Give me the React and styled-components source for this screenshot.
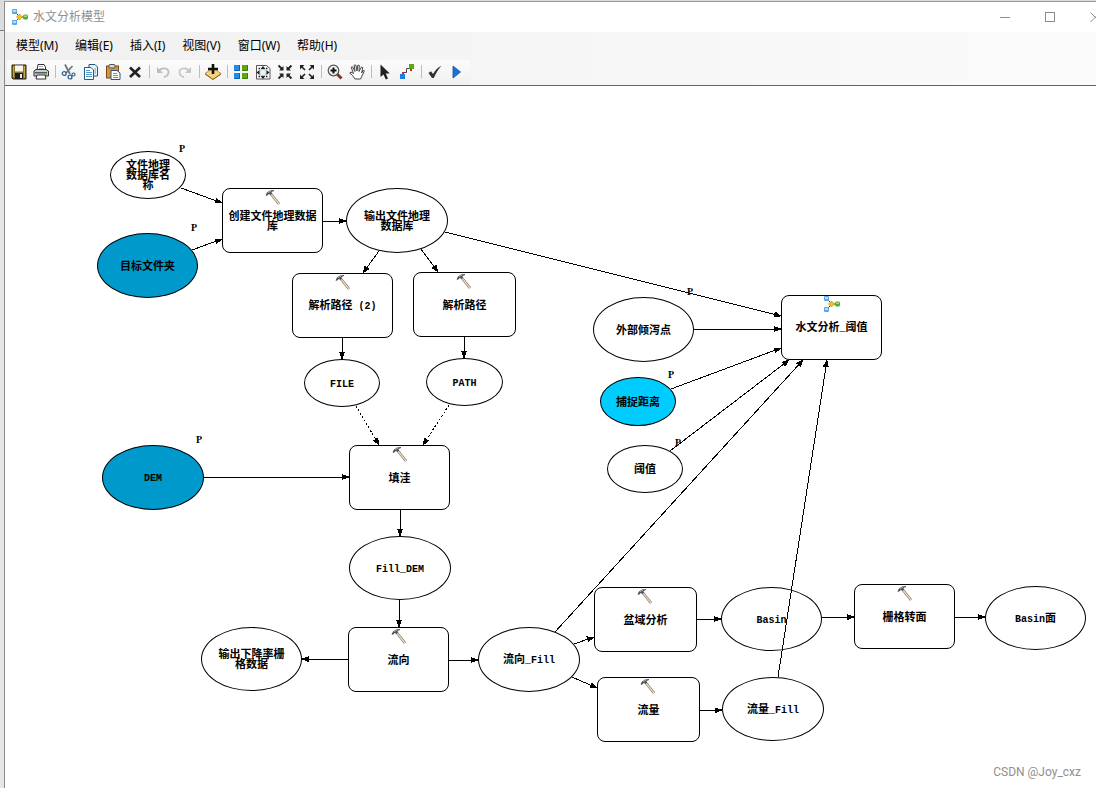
import React, { useState } from "react";
import styled, { createGlobalStyle } from "styled-components";

const menus = ["模型(M)", "编辑(E)", "插入(I)", "视图(V)", "窗口(W)", "帮助(H)"];

// canvas coordinates of every element of the model
const nodes = [
  { id: "name", kind: "data", x: 105, y: 65, w: 76, h: 48, lines: ["文件地理", "数据库名", "称"] },
  { id: "folder", kind: "data", x: 92, y: 147, w: 101, h: 65, fill: "#0099cc", lines: ["目标文件夹"] },
  { id: "create", kind: "tool", x: 217, y: 102, w: 101, h: 65, lines: ["创建文件地理数据", "库"] },
  { id: "gdb", kind: "data", x: 341, y: 102, w: 102, h: 65, lines: ["输出文件地理", "数据库"] },
  { id: "parse2", kind: "tool", x: 287, y: 187, w: 101, h: 65, lines: ["解析路径 (2)"] },
  { id: "parse", kind: "tool", x: 408, y: 186, w: 103, h: 65, lines: ["解析路径"] },
  { id: "file", kind: "data", x: 299, y: 273, w: 76, h: 48, lines: ["FILE"] },
  { id: "path", kind: "data", x: 421, y: 272, w: 77, h: 48, lines: ["PATH"] },
  { id: "dem", kind: "data", x: 97, y: 359, w: 102, h: 65, fill: "#0099cc", lines: ["DEM"] },
  { id: "fill", kind: "tool", x: 344, y: 359, w: 101, h: 65, lines: ["填洼"] },
  { id: "filldem", kind: "data", x: 344, y: 450, w: 102, h: 64, lines: ["Fill_DEM"] },
  { id: "flowdir", kind: "tool", x: 343, y: 541, w: 101, h: 65, lines: ["流向"] },
  { id: "drop", kind: "data", x: 196, y: 541, w: 101, h: 64, lines: ["输出下降率栅", "格数据"] },
  { id: "dirfill", kind: "data", x: 473, y: 541, w: 102, h: 65, lines: ["流向_Fill"] },
  { id: "basintool", kind: "tool", x: 589, y: 501, w: 103, h: 65, lines: ["盆域分析"] },
  { id: "flowacc", kind: "tool", x: 592, y: 591, w: 103, h: 65, lines: ["流量"] },
  { id: "basin", kind: "data", x: 716, y: 501, w: 101, h: 64, lines: ["Basin"] },
  { id: "accfill", kind: "data", x: 717, y: 591, w: 102, h: 64, lines: ["流量_Fill"] },
  { id: "raster", kind: "tool", x: 849, y: 498, w: 101, h: 65, lines: ["栅格转面"] },
  { id: "basinpoly", kind: "data", x: 980, y: 500, w: 101, h: 64, lines: ["Basin面"] },
  { id: "pour", kind: "data", x: 588, y: 211, w: 101, h: 65, lines: ["外部倾泻点"] },
  { id: "snap", kind: "data", x: 595, y: 291, w: 76, h: 49, fill: "#00ccff", lines: ["捕捉距离"] },
  { id: "limit", kind: "data", x: 602, y: 359, w: 76, h: 48, lines: ["阈值"] },
  { id: "hydro", kind: "tool", x: 776, y: 209, w: 101, h: 65, icon: "model", lines: ["水文分析_阈值"] },
];

// [x1, y1, x2, y2, dotted]
const links = [
  [176, 102, 217, 117],
  [187, 164, 217, 153],
  [318, 135, 341, 135],
  [374, 165, 358, 187],
  [416, 163, 433, 186],
  [440, 146, 776, 230],
  [337, 252, 337, 273],
  [459, 251, 459, 272],
  [351, 320, 374, 359, true],
  [444, 319, 418, 359, true],
  [199, 391, 344, 391],
  [395, 424, 395, 450],
  [394, 514, 394, 541],
  [343, 574, 297, 573],
  [444, 574, 473, 574],
  [569, 558, 589, 551],
  [567, 591, 592, 602],
  [550, 546, 798, 274],
  [692, 533, 716, 533],
  [695, 625, 717, 624],
  [817, 532, 849, 531],
  [950, 531, 980, 531],
  [773, 591, 822, 274],
  [689, 243, 776, 243],
  [666, 303, 776, 262],
  [665, 365, 784, 274],
];

const params = [
  [174, 58],
  [186, 137],
  [191, 349],
  [682, 201],
  [663, 284],
  [670, 352],
];

const ModelIcon = () => (
  <svg width="16" height="16" viewBox="0 0 16 16">
    <path d="M3 3 L8 8 L3 13 M8 8 H12" fill="none" stroke="#444" />
    <rect x="0" y="0" width="5" height="5" rx="1" fill="#5aa9e8" />
    <rect x="1" y="1" width="3" height="2" fill="#b5dcfa" />
    <rect x="0" y="11" width="5" height="5" rx="1" fill="#5aa9e8" />
    <rect x="1" y="12" width="3" height="2" fill="#b5dcfa" />
    <path d="M7.5 5 L10.5 8 L7.5 11 L4.5 8 Z" fill="#f6c21c" stroke="#b98400" strokeWidth=".6" />
    <rect x="11" y="5.5" width="5" height="5" rx="1.5" fill="#4fae35" />
    <rect x="12" y="6.5" width="3" height="1.5" fill="#a5dd86" />
  </svg>
);

const HammerIcon = () => (
  <svg width="16" height="16" viewBox="0 0 16 16">
    <path d="M6 5 L14 15" stroke="#7b6a55" strokeWidth="2.6" />
    <path d="M6 5 L14 15" stroke="#e9dcc3" strokeWidth="1.3" />
    <path d="M0.5 6.5 L2 3.5 L5 1.5 L9 1 L9 2 L6.5 3 L7 5 L5 6 L4 4.8 L2 6.8 Z" fill="#4c4f52" />
    <path d="M3 3.6 L6 2.2" stroke="#c4c8cb" strokeWidth=".8" />
  </svg>
);

const drawings = {
  save: (
    <>
      <path d="M1 1 H15 V15 H2 L1 14 Z" fill="#8a7529" stroke="#26200a" />
      <rect x="4" y="1.5" width="8" height="6" fill="#f4f4f0" />
      <rect x="4" y="9" width="8" height="6" fill="#1d1d1d" />
      <rect x="9" y="10" width="2" height="4" fill="#e8e8e8" />
      <path d="M2.5 2 V13 M13.5 2 V14" stroke="#c2ab4e" />
    </>
  ),
  print: (
    <>
      <path d="M4 6 L5 0.5 H11 L12.5 3 V6" fill="#fff" stroke="#333" />
      <path d="M6 2.5 H10 M6 4.5 H11" stroke="#999" strokeWidth=".8" />
      <path d="M1 7 L3 5.5 H13 L15.5 7 V12 H1 Z" fill="#c9cdd2" stroke="#333" />
      <rect x="2" y="8" width="12" height="1.5" fill="#565b60" />
      <path d="M4 11 H12 L13 15 H3 Z" fill="#fff" stroke="#333" />
      <rect x="12" y="10" width="2" height="1" fill="#5ec03c" />
    </>
  ),
  cut: (
    <>
      <path d="M4 0.5 L9 10 M11.5 2 L5 9" stroke="#6c7780" strokeWidth="1.8" fill="none" />
      <circle cx="3.2" cy="9.5" r="1.9" fill="#fff" stroke="#2f6596" strokeWidth="1.4" />
      <circle cx="9" cy="13" r="1.9" fill="#fff" stroke="#2f6596" strokeWidth="1.4" />
      <circle cx="12.5" cy="10.5" r="1.5" fill="#fff" stroke="#2f6596" strokeWidth="1.2" />
    </>
  ),
  copy: (
    <>
      <path d="M6 0.5 H12 L14.5 3 V12 H6 Z" fill="#e8f3fb" stroke="#275a80" />
      <path d="M1.5 3.5 H8 L10.5 6 V15.5 H1.5 Z" fill="#fff" stroke="#275a80" />
      <path d="M3 6.5 H7 M3 8.5 H9 M3 10.5 H9 M3 12.5 H9 M11.5 5 H13 M11.5 7 H13 M11.5 9 H13" stroke="#4f9bd1" />
    </>
  ),
  paste: (
    <>
      <rect x="1.5" y="2" width="12" height="12" fill="#d6923c" stroke="#7a4b12" />
      <rect x="4" y="0.5" width="6" height="3.5" rx="1" fill="#d8d8d8" stroke="#555" />
      <path d="M6 6.5 H12 L15 9 V15.5 H6 Z" fill="#fff" stroke="#275a80" />
      <path d="M8 9.5 H12 M8 11.5 H13 M8 13.5 H13" stroke="#4f9bd1" />
    </>
  ),
  remove: <path d="M3 3.5 L13 13 M13 3.5 L3 13" stroke="#222" strokeWidth="2.6" />,
  undo: (
    <>
      <path d="M4 6.5 C8 2.5 14 4.5 13.5 8.5 C13.3 11 11.5 12.5 9 13" fill="none" stroke="#bdbdbd" strokeWidth="1.8" />
      <path d="M2 3 V9 H8 Z" fill="#bdbdbd" />
    </>
  ),
  redo: (
    <>
      <path d="M12 6.5 C8 2.5 2 4.5 2.5 8.5 C2.7 11 4.5 12.5 7 13" fill="none" stroke="#c6c6c6" strokeWidth="1.8" />
      <path d="M14 3 V9 H8 Z" fill="#c6c6c6" />
    </>
  ),
  add: (
    <>
      <path d="M8 4 L16 9.5 L8 15.5 L0 9.5 Z" fill="#f6d27d" stroke="#a87d2c" strokeWidth=".8" />
      <path d="M0 10 L8 15.5 L16 10" fill="none" stroke="#8a6015" />
      <path d="M8 0 V10 M3 5 H13" stroke="#111" strokeWidth="2.6" />
    </>
  ),
  layout: (
    <>
      <rect x="1" y="1" width="6" height="6" fill="#1e8ce8" />
      <rect x="9" y="1" width="6" height="6" fill="#5fa80c" />
      <rect x="1" y="9" width="6" height="6" fill="#1e8ce8" />
      <rect x="9" y="9" width="6" height="6" fill="#5fa80c" />
      <path d="M1.5 6.5 H6.5 V1 M1.5 14.5 H6.5 V9" fill="none" stroke="#0d5fb4" />
      <path d="M9.5 6.5 H14.5 V1 M9.5 14.5 H14.5 V9" fill="none" stroke="#3f7a00" />
    </>
  ),
  extent: (
    <>
      <path d="M1.5 1.5 H11.5 L15 4.5 V15 H1.5 Z" fill="#fff" stroke="#555" />
      <circle cx="8" cy="8.5" r="3.4" fill="#e8f3fa" stroke="#9bb" strokeWidth=".8" />
      <path d="M8 2 L10.5 5 H5.5 Z M8 15 L10.5 12 H5.5 Z M1.5 8.5 L4.5 6 V11 Z M14.5 8.5 L11.5 6 V11 Z" fill="#222" />
      <path d="M3.5 4.5 H5 M11 4.5 H12.5 M3.5 12.5 H5 M11 12.5 H12.5" stroke="#222" strokeWidth="1.6" />
    </>
  ),
  shrink: (
    <>
      <path d="M1.5 1.5 L5 5 M14.5 1.5 L11 5 M1.5 14.5 L5 11 M14.5 14.5 L11 11" stroke="#222" strokeWidth="1.8" />
      <path d="M6.5 2 V6.5 H2 Z M9.5 2 V6.5 H14 Z M6.5 14 V9.5 H2 Z M9.5 14 V9.5 H14 Z" fill="#222" />
    </>
  ),
  expand: (
    <>
      <path d="M2 2 L6 6 M14 2 L10 6 M2 14 L6 10 M14 14 L10 10" stroke="#222" strokeWidth="1.6" />
      <path d="M1 1 H5.5 L1 5.5 Z M15 1 H10.5 L15 5.5 Z M1 15 H5.5 L1 10.5 Z M15 15 H10.5 L15 10.5 Z" fill="#222" />
    </>
  ),
  zoom: (
    <>
      <path d="M10 10 L14.5 14.5" stroke="#7c3b22" strokeWidth="3" />
      <circle cx="6.5" cy="6.5" r="5.3" fill="#eef6fb" stroke="#555" strokeWidth="1.2" />
      <path d="M6.5 3.5 V9.5 M3.5 6.5 H9.5" stroke="#111" strokeWidth="2" />
    </>
  ),
  pan: (
    <path
      d="M6 15 L3.5 11.5 L0.8 9 L2 8 L4.5 9.5 L2.2 3.2 L3.6 2.8 L6 7.5 L5.2 1.2 L6.8 1 L8 7 L8.8 1.2 L10.3 1.4 L10 7.5 L12.5 3 L13.8 3.6 L12.6 9 L14.5 6 L15.3 7 L12.5 13 L11.5 15 Z"
      fill="#fff"
      stroke="#444"
    />
  ),
  select: <path d="M3.5 0.5 V13 L6.5 10.5 L8.8 15.5 L11 14.5 L8.8 9.5 H12.8 Z" fill="#222" />,
  connect: (
    <>
      <path d="M3.5 10 V8.5 H7.5 V4.5 H10" fill="none" stroke="#444" />
      <rect x="1" y="10" width="5" height="5" fill="#1e7fe0" />
      <rect x="10" y="0" width="5" height="5" fill="#5fa80c" />
      <rect x="3" y="8" width="2" height="2" fill="#d22" />
      <rect x="11" y="5" width="2" height="2" fill="#d22" />
    </>
  ),
  validate: <path d="M1.5 9 L4 7.2 L6 10 C8 6.5 10.5 3.5 14.5 1.8 C11.5 5 9 9 6.8 14 H5 Z" fill="#333" />,
  run: <path d="M4 2 L11.5 8 L4 14 Z" fill="#1a73d9" stroke="#0b4fa5" strokeWidth=".8" />,
};

const toolGroups = [
  [["save", "保存"], ["print", "打印"]],
  [["cut", "剪切"], ["copy", "复制"], ["paste", "粘贴"], ["remove", "删除"]],
  [["undo", "撤消"], ["redo", "恢复"]],
  [["add", "添加数据或工具"]],
  [["layout", "自动布局"], ["extent", "全图"], ["shrink", "缩小"], ["expand", "放大"]],
  [["zoom", "缩放"], ["pan", "平移"]],
  [["select", "选择"], ["connect", "连接"]],
  [["validate", "验证"], ["run", "运行"]],
];

// latin runs are set one size smaller than the chinese ones
const renderText = (text) =>
  text
    .split(/([\x20-\x7e]+)/)
    .filter(Boolean)
    .map((run, i) => (/[\x20-\x7e]/.test(run) ? <Latin key={i}>{run}</Latin> : run));

const App = () => {
  const [active, setActive] = useState("");

  return (
    <Desktop>
      <GlobalStyle />
      <Window>
        <TitleBar>
          <ModelIcon />
          <Title>水文分析模型</Title>
          <WindowButtons>
            <WindowButton aria-label="最小化">
              <svg width="11" height="11">
                <path d="M0 5.5 H10" stroke="#8c8c8c" />
              </svg>
            </WindowButton>
            <WindowButton aria-label="最大化">
              <svg width="11" height="11">
                <rect x=".5" y=".5" width="9" height="9" fill="none" stroke="#8c8c8c" />
              </svg>
            </WindowButton>
            <WindowButton aria-label="关闭">
              <svg width="11" height="11">
                <path d="M0.5 0.5 L10 10 M10 0.5 L0.5 10" stroke="#8c8c8c" />
              </svg>
            </WindowButton>
          </WindowButtons>
        </TitleBar>
        <Bars>
          <MenuBar>
            {menus.map((item) => (
              <MenuButton key={item}>{item}</MenuButton>
            ))}
          </MenuBar>
          <Toolbar>
            {toolGroups.map((group, i) => (
              <ToolGroup key={i}>
                {group.map(([id, label]) => (
                  <ToolButton
                    key={id}
                    aria-label={label}
                    $active={active === id}
                    onClick={() => setActive(id)}
                  >
                    <svg width="16" height="16" viewBox="0 0 16 16">
                      {drawings[id]}
                    </svg>
                  </ToolButton>
                ))}
              </ToolGroup>
            ))}
          </Toolbar>
        </Bars>
        <Canvas>
          {nodes.map((node) => (
            <Node key={node.id} $node={node}>
              {node.kind === "tool" && (
                <NodeIcon>{node.icon === "model" ? <ModelIcon /> : <HammerIcon />}</NodeIcon>
              )}
              {node.lines.map((line) => (
                <span key={line}>{renderText(line)}</span>
              ))}
            </Node>
          ))}
          <Links>
            <defs>
              <marker
                id="arrow"
                markerUnits="userSpaceOnUse"
                markerWidth="8"
                markerHeight="6"
                refX="7"
                refY="3"
                orient="auto"
              >
                <path d="M0 0 L8 3 L0 6 Z" />
              </marker>
            </defs>
            {links.map(([x1, y1, x2, y2, dotted], i) => (
              <line
                key={i}
                x1={x1}
                y1={y1}
                x2={x2}
                y2={y2}
                strokeDasharray={dotted ? "2 2" : undefined}
                markerEnd="url(#arrow)"
              />
            ))}
          </Links>
          {params.map(([x, y]) => (
            <Param key={`${x}-${y}`} $x={x} $y={y}>
              P
            </Param>
          ))}
          <Watermark>CSDN @Joy_cxz</Watermark>
        </Canvas>
      </Window>
    </Desktop>
  );
};

const GlobalStyle = createGlobalStyle`
  * {
    box-sizing: border-box;
  }
  body {
    margin: 0;
    overflow: hidden;
    font-family: "Noto Sans", "Noto Sans CJK SC", sans-serif;
    font-size: 12px;
  }
  button {
    border: 0;
    padding: 0;
    background: none;
    font: inherit;
    color: inherit;
  }
  svg {
    display: block;
  }
`;

const Desktop = styled.div`
  display: flex;
  height: 100vh;
  padding: 1px 0 0 4px;
  background: linear-gradient(#dcdcdc 30px, #7a7a7a 30px, #7a7a7a 31px, #e6e6e6 31px);
`;

const Window = styled.div`
  flex: 1;
  min-width: 0;
  display: flex;
  flex-direction: column;
  border-top: 1px solid #9a9a9a;
  border-left: 1px solid #8a8a8a;
  overflow: hidden;
  background: #fff;
`;

const TitleBar = styled.header`
  display: flex;
  align-items: center;
  gap: 5px;
  height: 30px;
  padding-left: 7px;
`;

const Title = styled.h1`
  margin: 0;
  font-size: 12px;
  line-height: 18px;
  font-weight: 400;
  color: #8f8f8f;
`;

const WindowButtons = styled.div`
  display: flex;
  margin-left: auto;
  margin-right: -22px;
`;

const WindowButton = styled.button`
  display: grid;
  place-items: center;
  width: 45px;
  height: 28px;
`;

const Bars = styled.div`
  background: linear-gradient(to right, #f0f0f0, #fafafa 90%);
`;

const MenuBar = styled.nav`
  display: flex;
  gap: 17px;
  height: 28px;
  padding-left: 11px;
`;

const MenuButton = styled.button`
  line-height: 28px;
  color: #000;
`;

const Toolbar = styled.div`
  display: flex;
  width: max-content;
  height: 25px;
  margin-left: 2px;
  padding: 0 2px 2px 1px;
  border-radius: 3px;
  background: linear-gradient(#fcfcfc, #f0f0f0);
`;

const ToolGroup = styled.div`
  display: flex;
  align-items: center;

  & + &::before {
    content: "";
    width: 1px;
    height: 13px;
    margin: 0 2px 0 3px;
    background: #bdbdbd;
  }
`;

const ToolButton = styled.button`
  display: grid;
  place-items: center;
  width: 22px;
  height: 22px;
  background: ${(props) => (props.$active ? "#d8e6f2" : "none")};
`;

const Canvas = styled.main`
  position: relative;
  flex: 1;
  border-top: 1px solid #646464;
  overflow: hidden;
`;

const Node = styled.div`
  position: absolute;
  left: ${(props) => props.$node.x}px;
  top: ${(props) => props.$node.y}px;
  width: ${(props) => props.$node.w}px;
  height: ${(props) => props.$node.h}px;
  display: flex;
  flex-direction: column;
  align-items: center;
  justify-content: center;
  padding-top: 2px;
  border: 1px solid #000;
  border-radius: ${(props) => (props.$node.kind === "tool" ? "8px" : "50%")};
  background: ${(props) => props.$node.fill || "#fff"};
  font-family: "Liberation Mono", "Noto Sans CJK SC", monospace;
  font-size: 11px;
  line-height: 10px;
  font-weight: 700;
  white-space: pre;
`;

const Latin = styled.span`
  font-size: 10px;
`;

const NodeIcon = styled.div`
  position: absolute;
  top: 0;
  left: 42px;
`;

const Links = styled.svg`
  position: absolute;
  top: 0;
  left: 0;
  width: 100%;
  height: 100%;
  pointer-events: none;
  shape-rendering: crispEdges;
  stroke-width: 1px;

  line {
    stroke: #000;
  }
`;

const Param = styled.span`
  position: absolute;
  left: ${(props) => props.$x}px;
  top: ${(props) => props.$y}px;
  font-family: "Liberation Serif", serif;
  font-size: 10px;
  line-height: 10px;
  font-weight: 700;
`;

const Watermark = styled.span`
  position: absolute;
  right: 15px;
  bottom: 8px;
  font-family: Roboto, sans-serif;
  font-size: 12px;
  line-height: 16px;
  color: #8f8f8f;
`;

export default App;
